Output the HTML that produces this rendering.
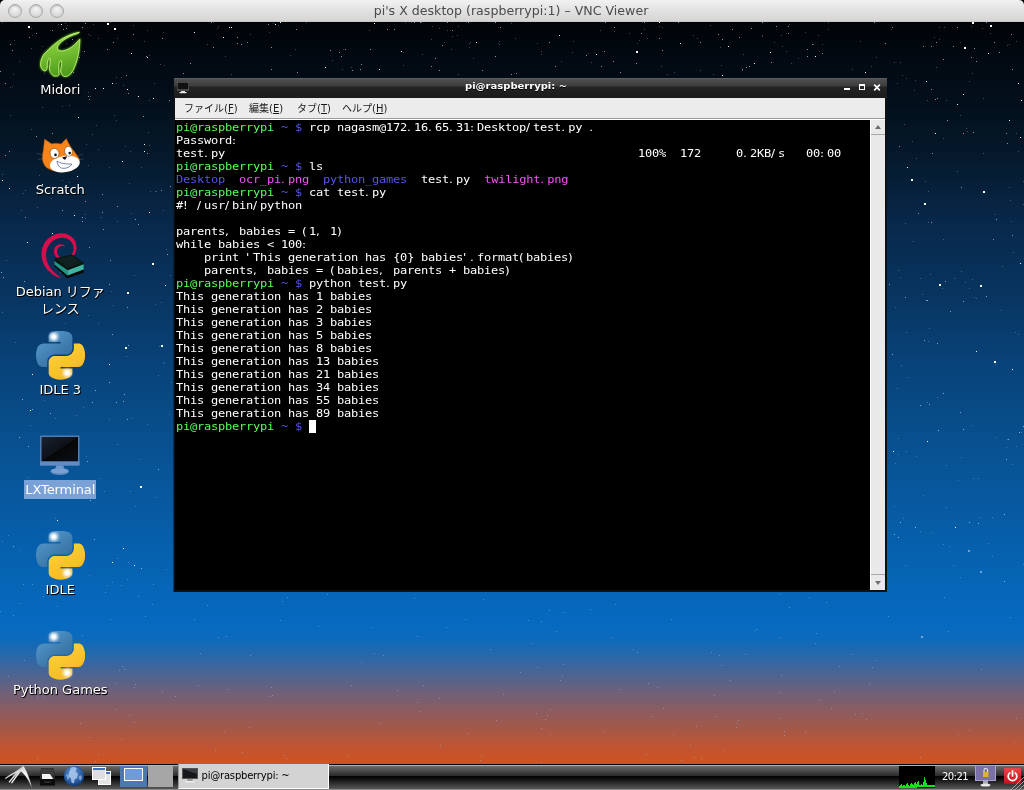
<!DOCTYPE html>
<html lang="ja">
<head>
<meta charset="utf-8">
<title>pi's X desktop (raspberrypi:1) - VNC Viewer</title>
<style>
*{box-sizing:border-box;margin:0;padding:0}
body>*{will-change:transform}
html,body{width:1024px;height:790px;overflow:hidden;background:#000}
body{position:relative;font-family:"DejaVu Sans","Liberation Sans","Noto Sans CJK JP",sans-serif;font-size:12px;color:#fff}
#mac{position:absolute;left:0;top:0;width:1024px;height:22px;background:linear-gradient(#f1f1f1,#e3e3e3 45%,#d5d5d5);border-bottom:1px solid #c6c6c6;border-radius:5px 5px 0 0;text-align:center;color:#4c4c4c;font-family:"DejaVu Sans","Liberation Sans",sans-serif;font-size:12.600px;line-height:21px;letter-spacing:0;padding-right:2px}
#mac .b{position:absolute;top:4px;width:14px;height:14px;border-radius:50%;background:radial-gradient(circle at 50% 35%,#f4f4f4,#dcdcdc 60%,#c6c6c6);border:1px solid #a9a9a9;box-shadow:inset 0 1px 1px #bbb}
#desk{position:absolute;left:0;top:22px;width:1024px;height:742px;overflow:hidden;background:linear-gradient(#010407 0px,#020912 38px,#030f1a 78px,#051a2d 138px,#08284a 200px,#08345f 269px,#084278 339px,#084e8c 408px,#07599f 478px,#0662b0 538px,#0667ba 578px,#066ac0 603px,#0e6abb 618px,#2868aa 634px,#4e6491 653px,#706078 671px,#8c5c5f 689px,#a55848 707px,#c05432 725px,#d0521f 742px)}
.ic{position:absolute;left:0;width:120px;text-align:center;font-size:13px;line-height:17px;color:#fff;text-shadow:1px 1px 1px #000,0 0 2px #000}
.ic svg{display:block;margin:0 auto}
.ic{position:absolute;left:0;width:120.500px;text-align:center;font-size:13px;line-height:17px;color:#fff;white-space:pre;text-shadow:1px 1px 0 #000,0 1px 1px rgba(0,0,0,.7)}
.ig{position:absolute;left:36px;width:48px;height:48px}
.ic span{background:#7ba2d7;padding:2px 1px 2px 1px;text-shadow:none;letter-spacing:-0.100px}
#win{position:absolute;left:174px;top:78px;width:713px;height:514px;background:#0e1013;box-shadow:-1px 0 0 rgba(8,16,26,.5)}
#tb{position:absolute;left:0;top:0;right:0;height:20px;background:linear-gradient(#6a6a6a 0,#505050 1px,#3c3c3c 8px,#242424 9px,#1c1c1c 19px);color:#fff;font-weight:bold;font-size:10px;line-height:15px;text-shadow:0 1px 0 #000}
#tb em{font-style:normal;position:absolute;left:291px;top:0;white-space:pre;transform:scaleY(.93);transform-origin:0 12px}
#mb{position:absolute;left:1px;top:20px;right:2px;height:22px;background:#ececec;border-bottom:1px solid #fff;color:#1a1a1a;font-size:10px;line-height:22px;white-space:pre}
#mb:after{content:"";position:absolute;left:0;right:0;bottom:0;height:1px;background:#9a9a9a}
#mb span{position:absolute;top:0}
#mb u{text-decoration:underline}
#term{position:absolute;left:1px;top:42px;width:695px;height:470px;background:#000;color:#fff;font-family:"DejaVu Sans Mono","Liberation Mono",monospace;font-size:12px;line-height:13px;letter-spacing:-0.2246px;white-space:pre;padding:1px 0 0 1px;overflow:hidden}
#term div{height:13px;transform:scaleY(.91);transform-origin:0 10px}
#term i{font-style:normal;display:inline-block;width:7px;letter-spacing:0;font-family:"DejaVu Sans","Liberation Sans",sans-serif;text-align:left;vertical-align:top;overflow:visible}
#term .g{color:#55ff55}#term .b{color:#5454e6}#term .m{color:#f455f4}
#term .cur{display:inline-block;width:7px;height:13px;background:#fff;vertical-align:top;transform:scaleY(1.0989);transform-origin:0 10px}
#sb{position:absolute;left:696px;top:42px;width:15px;height:470px;background:#e9e9e9;border-left:1px solid #fff}
#sb:before,#sb:after{content:"";position:absolute;left:4px;border:3.5px solid transparent}
#sb:before{top:1px;border-bottom:4px solid #6e6e6e;border-top-width:0;margin-top:4px}
#sb:after{bottom:5px;border-top:4px solid #6e6e6e;border-bottom-width:0}
#sb b{position:absolute;left:0;right:0;height:1px;background:#a8a8a8}
.wb{position:absolute;top:6px;width:6px;height:6px}
#panel{position:absolute;left:0;top:764px;width:1024px;height:26px;background:linear-gradient(#050505 0,#050505 1px,#b4b4ae 1px,#b4b4ae 2px,#6c6a6a 2px,#4a4a4a 7px,#2c2c2c 11.5px,#000 12px,#0a0a0a 14px,#3a3a3a 21px,#585858 25px,#8a8a8a 25px,#8a8a8a 26px);font-size:10px;color:#000}
#panel svg{position:absolute}
#pg1{position:absolute;left:120px;top:2px;width:27px;height:21px;background:#4b78b0}
#pg1 b{position:absolute;left:4px;top:2px;width:19px;height:13px;background:#6f9cd9;border:1px solid #fff}
#pg2{position:absolute;left:147.500px;top:2px;width:25.500px;height:21px;background:#a6a6a6}
#task{position:absolute;left:178px;top:0;width:151px;height:25px;background:#d3d3d3;border-right:1px solid #fff;border-bottom:1px solid #fff;border-left:1px solid #9a9a9a;line-height:24px;padding-left:22.500px;white-space:pre;color:#000;font-size:10px;letter-spacing:-0.200px}
#cpu{position:absolute;left:899px;top:2px;width:36px;height:22px;background:#000;overflow:hidden}
#clock{position:absolute;left:941px;top:2px;width:28px;line-height:21px;color:#fff;font-size:10px;text-align:center;letter-spacing:-0.550px}
</style>
</head>
<body>
<div id="mac"><span class="b" style="left:8px"></span><span class="b" style="left:29px"></span><span class="b" style="left:50px"></span>pi's X desktop (raspberrypi:1) – VNC Viewer</div>
<div id="desk"><svg width="1024" height="742" viewBox="0 0 1024 742" shape-rendering="crispEdges" style="position:absolute;left:0;top:0"><path d="M98 16h1M439 6h1M126 334h1M1016 424h1M928 169h1M499 19h1M149 33h1M700 48h1M934 15h1M912 119h1M710 3h1M1016 19h1M902 53h1M954 256h1M295 27h1M55 496h1M1009 165h1M57 527h1M451 27h1M953 543h1M971 403h1M432 4h1M8 513h1M988 521h1M116 98h1M647 16h1M149 78h1M458 52h1M39 153h1M37 185h1M1012 442h1M117 536h1M148 110h1M171 360h1M88 293h1M600 8h1M2 152h1M85 192h1M470 20h1M6 238h1M135 484h1M942 266h1M158 353h1M273 1h1M939 17h1M431 17h1M995 192h1M1006 425h1M762 14h1M156 169h1M1018 312h1M499 22h1M913 219h1M44 37h1M2 519h1M76 393h1M895 441h1M2 0h1M943 116h1M629 11h1M860 19h1M405 0h1M805 10h1M123 63h1M906 56h1M573 19h1M914 68h1M971 4h1M828 7h1M128 540h1M133 3h1M973 456h1M161 280h1M132 396h1M667 52h1M915 58h1M75 27h1M90 74h1M639 18h1M1015 310h1M332 38h1M351 45h1M85 196h1M78 413h1M897 61h1M1002 244h1M819 29h1M83 385h1M163 10h1M278 3h1M452 14h1M983 76h1M75 71h1M541 32h1M166 227h1M98 127h1M69 83h1M93 2h1M972 51h1M908 355h1M90 13h1M403 43h1M130 129h1M978 456h1M894 484h1M444 20h1M961 249h1M159 324h1M67 3h1M786 29h1M99 456h1M63 526h1M98 301h1M2 290h1M110 0h1M51 176h1M69 160h1M898 432h1M473 36h1M713 52h1M828 0h1M40 372h1M21 188h1M217 6h1M818 13h1M946 78h1M742 48h1M30 403h1M147 402h1M925 159h1M898 416h1M969 266h1M13 52h1M154 61h1M58 2h1M992 495h1M1011 199h1M101 195h1M937 375h1M70 141h1M111 269h1M169 392h1M923 473h1M65 1h1M163 188h1M898 248h1M86 122h1M1023 159h1M992 534h1M117 422h1M19 528h1M976 276h1M1010 178h1M949 524h1M62 158h1M42 24h1M995 342h1M774 20h1M96 103h1M990 11h1M903 496h1M798 36h1M958 458h1M44 378h1M749 44h1M116 61h1M905 543h1M891 7h1M1009 22h1M125 124h1M1013 230h1M343 27h1M92 112h1M572 30h1M946 485h1M109 145h1M23 171h1M141 145h1M42 85h1M73 372h1M588 31h1M960 555h1M44 51h1M721 43h1M1023 182h1M1018 129h1M895 285h1M469 25h1M86 434h1M60 70h1M218 4h1M661 44h1M129 161h1M789 2h1M498 21h1M743 32h1M974 275h1M901 343h1M637 21h1M76 528h1M121 55h1M996 415h1M422 32h1M88 12h1M403 30h1M231 52h1M147 8h1M541 29h1M160 42h1M164 43h1M822 22h1M900 255h1M871 44h1M113 283h1M693 13h1M960 20h1M943 217h1M166 547h1M916 434h1M900 40h1M117 199h1M89 553h1M155 169h1M957 149h1M928 200h1M697 16h1M163 340h1M447 8h1M10 65h1M55 396h1M674 50h1M928 319h1M561 39h1M250 12h1M458 4h1M927 78h1M50 541h1M19 39h1M720 25h1M813 22h1M67 341h1M31 6h1M225 34h1M31 107h1M88 70h1M929 306h1M10 93h1M906 310h1M131 191h1M88 143h1M876 35h1M306 0h1M1001 288h1M411 0h1M762 13h1M144 19h1M946 443h1M969 59h1M31 26h1M112 560h1M12 64h1M537 21h1M269 10h1M104 469h1M662 5h1M906 429h1M67 147h1M149 123h1M614 9h1M920 256h1M944 5h1M983 131h1M1016 111h1M86 276h1M469 21h1M127 557h1M66 21h1M342 47h1M982 6h1M936 45h1M66 124h1M905 201h1M155 282h1M916 136h1M939 5h1M967 109h1M922 272h1M644 7h1M920 509h1M1023 542h1M591 40h1M62 84h1M515 16h1M156 475h1M32 13h1M931 510h1M965 260h1M894 40h1M421 0h1M961 435h1M290 33h1M781 13h1M77 245h1M980 495h1M15 320h1M207 22h1M14 18h1M62 415h1M904 102h1M782 24h1M511 1h1M109 397h1M27 455h1M897 366h1M139 437h1M130 469h1M150 169h1M369 8h1M457 13h1M966 106h1M60 250h1M1007 23h1M960 93h1M117 16h1M114 93h1M170 253h1M943 522h1M927 380h1M972 257h1M65 301h1M1021 410h1M25 168h1M134 253h1M1007 417h1M659 4h1M930 252h1M791 41h1M852 47h1M116 55h1M164 341h1" stroke="#cfe2ff" stroke-width="1" opacity=".28"/><path d="M143 94h1M452 8h1M370 27h1M128 323h1M133 12h1M1011 12h1M360 47h1M24 259h1M110 238h1M807 27h1M107 27h1M971 35h1M3 255h1M268 2h1M938 408h1M926 278h1M749 44h1M37 473h1M29 15h1M113 20h1M500 5h1M10 22h1M1012 47h1M296 7h1M924 318h1M95 368h1M678 0h1M807 34h1M442 23h1M936 20h1M69 438h1M604 29h1M957 5h1M885 21h1M943 371h1M482 48h1M12 28h1M812 22h1M1004 492h1M109 360h1M394 7h1M905 275h1M1007 121h1M516 51h1M923 24h1M79 35h1M63 7h1M87 439h1M271 25h1M1006 437h1M339 30h1M943 37h1M25 195h1M32 387h1M935 77h1M141 546h1M960 390h1M961 165h1M986 0h1M993 217h1M788 11h1M1019 410h1M82 195h1M169 78h1M28 424h1M874 0h1M36 114h1M102 172h1M124 372h1M915 505h1M73 50h1M52 111h1M116 380h1M586 33h1M601 44h1M414 0h1M976 39h1M751 6h1M146 34h1M950 289h1M929 382h1M82 5h1M341 34h1M549 20h1M1006 111h1M127 285h1M973 110h1M211 0h1M13 524h1M892 332h1M52 8h1M732 7h1M996 197h1M123 379h1M5 133h1M297 50h1M1004 559h1M127 397h1M89 225h1M644 0h1M932 131h1M892 5h1M435 36h1M788 4h1M947 98h1M82 199h1M620 50h1M927 278h1M387 7h1M636 41h1M495 0h1M613 39h1M994 20h1M889 262h1M345 27h1M84 29h1M1012 213h1M762 0h1M605 0h1M190 41h1M85 1h1M999 30h1M72 17h1M918 191h1M89 77h1M92 380h1M147 131h1M986 274h1M420 0h1M162 16h1M641 11h1M431 44h1M978 501h1M974 26h1M742 47h1M54 29h1M718 12h1M678 0h1M511 52h1M94 517h1M5 61h1M237 21h1M1 250h1M963 279h1M659 16h1M352 48h1M920 383h1M52 29h1M19 415h1M241 22h1M112 312h1M138 202h1M899 124h1M931 200h1M953 24h1M103 207h1M439 48h1M822 31h1M963 111h1M614 5h1M931 24h1M722 17h1M109 262h1M247 20h1M700 20h1M128 71h1M1008 417h1M237 15h1M937 321h1M102 190h1M9 129h1M170 164h1M495 34h1M85 179h1M771 40h1M36 11h1M555 44h1M126 53h1M963 407h1M271 47h1M161 168h1M447 0h1M66 6h1M931 67h1M898 515h1M90 478h1M894 512h1M776 4h1M88 74h1M945 259h1M213 25h1M900 500h1M468 0h1M662 28h1M60 316h1M158 447h1M937 76h1M969 500h1M330 28h1M56 23h1M62 188h1M183 51h1M117 184h1M361 42h1M739 15h1M22 377h1M50 391h1M746 45h1M167 232h1M135 197h1M47 327h1M0 49h1M1023 404h1" stroke="#dbe9ff" stroke-width="1" opacity=".6"/><path d="M127 67h1M680 21h1M57 498h1M907 145h1M957 82h1M131 31h1M476 20h1M955 505h1M815 34h1M153 76h1M1020 115h1M149 190h1M144 129h1M138 74h1M103 66h1M1009 98h1M926 59h1M893 429h1M229 5h1M42 162h1M1012 347h1M165 263h1M728 24h1M401 29h1M95 66h1M123 526h1M1020 241h1M122 139h1M865 50h1M77 154h1M988 31h1M9 166h1M275 2h1M61 2h1M74 193h1M27 220h1M722 53h1M927 419h1M223 15h1M596 32h1M659 0h1M754 41h1M231 5h1M379 47h1M559 13h1M30 388h1M1021 78h1M134 543h1M976 329h1M1018 61h1M325 45h1M2 158h1M374 1h1M280 0h1M52 211h1M109 342h1M147 35h1M112 540h1M78 95h1M112 61h1M770 30h1M32 352h1M963 72h1M935 111h1M194 10h1M144 122h1" stroke="#fff" stroke-width="1" opacity=".95"/><path d="M663 686h1M121 563h1M80 701h1M779 696h1M420 689h1M715 694h1M348 734h1M124 647h1M414 576h1M250 633h1M815 621h1M468 711h1M541 599h1M694 735h1M224 709h1M37 736h1M503 672h1M805 710h1M440 723h1M673 712h1M32 562h1M738 698h1M152 582h1M981 647h1M550 712h1M175 674h1M920 735h1M536 691h1M24 638h1M563 590h1M105 570h1M101 671h1M681 738h1M969 708h1M958 712h1M869 662h1M383 633h1M115 687h1M162 669h1M648 661h1M271 665h1M671 597h1M215 728h1M82 613h1M397 668h1M855 692h1M417 680h1M351 663h1M89 715h1M563 642h1M736 705h1M745 632h1M541 706h1M119 648h1M483 577h1M13 593h1M439 676h1M876 638h1M318 604h1M200 631h1M374 631h1M207 583h1M820 678h1M107 563h1M556 609h1M371 605h1M755 608h1M528 598h1M446 605h1M520 650h1M423 663h1M531 621h1M757 607h1M481 733h1M198 663h1M851 632h1M282 579h1M465 597h1M37 675h1M784 709h1M496 698h1M153 562h1M8 654h1M1014 720h1M816 611h1M134 700h1M826 580h1M270 674h1M719 633h1M721 643h1M714 673h1M272 673h1M944 575h1M809 575h1M380 701h1M361 640h1M862 691h1M57 584h1M872 645h1M23 562h1M43 574h1M779 572h1M550 687h1M701 736h1M637 630h1M284 733h1M480 738h1M619 667h1M723 728h1M138 574h1M948 609h1M839 644h1M611 615h1M547 693h1M286 736h1M98 732h1M1016 696h1M784 713h1M68 645h1M537 645h1M134 665h1M562 654h1M1010 595h1M866 697h1M604 709h1M789 585h1M417 614h1M888 594h1M280 598h1M116 661h1M327 572h1M218 615h1M490 627h1M541 740h1M690 723h1M831 686h1M226 614h1M652 694h1M0 589h1M545 697h1M122 644h1M95 739h1M711 630h1M737 701h1M633 627h1M657 665h1M590 587h1M227 667h1M135 662h1M780 615h1M121 717h1M696 704h1M129 693h1M646 732h1M43 675h1M145 594h1M110 597h1M781 653h1M615 582h1M730 658h1M249 705h1M834 669h1M242 730h1M560 658h1M194 597h1M20 581h1M549 588h1M779 670h1M287 575h1" stroke="#9cc4f4" stroke-width="1" opacity=".45"/><path d="M636 30h2M990 4h2M972 1h2M911 158h2M983 170h2M964 26h2M924 182h2M980 264h2M994 340h2M939 263h2M114 7h2M107 2h2M28 5h2M91 -1h2M125 326h2M140 465h2M161 324h2M127 271h2M152 242h2" stroke="#fff" stroke-width="2"/><path d="M968 529h2M980 550h2M921 615h2" stroke="#b8d8ff" stroke-width="2" opacity=".55"/></svg></div>
<svg width="0" height="0" style="position:absolute"><defs>
<linearGradient id="pyb" x1="0" y1="0" x2="0.8" y2="1"><stop offset="0" stop-color="#5a9fd4"/><stop offset="1" stop-color="#306998"/></linearGradient>
<linearGradient id="pyy" x1="0.2" y1="0" x2="0.8" y2="1"><stop offset="0" stop-color="#ffd43b"/><stop offset="1" stop-color="#f2b322"/></linearGradient>
<filter id="gw" x="-50%" y="-50%" width="200%" height="200%"><feGaussianBlur stdDeviation="3.5"/></filter>
<g id="py"><path fill="url(#pyb)" d="M54.9 0C50.3 0 46 .4 42.1 1.1 30.8 3.1 28.7 7.3 28.7 15v10.3h26.8v3.4H18.6c-7.8 0-14.6 4.7-16.7 13.6-2.5 10.2-2.6 16.6 0 27.2 1.9 8 6.4 13.6 14.2 13.6h9.3V70.8c0-8.8 7.6-16.6 16.7-16.6h26.8c7.5 0 13.4-6.1 13.4-13.6V15c0-7.3-6.1-12.7-13.4-13.9C64.3.3 59.5 0 54.900 0z"/><path fill="url(#pyy)" d="M85.600 28.700v11.900c0 9.200-7.800 17-16.700 17H42.100c-7.300 0-13.400 6.300-13.400 13.600v25.500c0 7.300 6.300 11.500 13.400 13.600 8.500 2.500 16.600 2.900 26.800 0 6.700-2 13.400-5.900 13.400-13.600V86.500H55.500v-3.400h40.200c7.800 0 10.700-5.400 13.400-13.600 2.800-8.400 2.700-16.500 0-27.200-1.900-7.800-5.600-13.600-13.400-13.600z"/><circle cx="40.400" cy="13.300" r="9" fill="#fff" filter="url(#gw)"/><circle cx="40.400" cy="13.300" r="4.200" fill="#fff"/><circle cx="70.600" cy="96.700" r="9" fill="#fff" filter="url(#gw)"/><circle cx="70.600" cy="96.700" r="4.200" fill="#fff"/></g>
</defs></svg>

<!-- Midori -->
<svg class="ig" style="top:30px" viewBox="0 0 48 48"><defs><linearGradient id="mg" x1="0.3" y1="0" x2="0.5" y2="1"><stop offset="0" stop-color="#9be04a"/><stop offset="1" stop-color="#4c9a1a"/></linearGradient><filter id="mgl" x="-20%" y="-20%" width="140%" height="140%"><feGaussianBlur stdDeviation="1.2"/></filter></defs>
<path id="mp" d="M43.400 2.300C36 3.500 28 7.500 24.300 9.900 18 14 11 21 7.900 24.300 5.500 28 4.400 32 4.600 34.900c.2 2.600 1.400 4.900 3.400 5.700 1.500 .6 2.800-.1 3.200-3.100 .1-2.500 .1-4 .3-5.300 .3-2.200 1.100-4.200 2-4.200 .8 .3 .7 2.500 .6 4.200-.2 2.800-.7 4.800-.6 6.600 .2 2.200 .7 3.700 1.600 4.600 1.400 2.100 2.900 2.800 4 2.700 1.900 .1 3.500-.3 3.900-1.400 .2-1.700-.4-3.700-.3-5.900 0-1.800 .1-3.800 .3-5.300 .4-2 1.200-3.200 2-3.200 .8 .5 .7 2.700 .6 4.600-.2 2.100-1 4.100-.9 5.900 .2 2 .8 3.400 1.600 4.300 1.200 1.200 2.700 1.500 4 1.300 1.700-.4 3.300-1.600 4.600-3 1.600-1.900 2.900-4.400 3.900-7.200 1.500-3.700 2.600-7.200 3.300-10.600 .7-3.100 1.100-6.100 1.300-9.200 .3-2.900 .4-5.400 .4-7.200-1.800 1.800-3.300 3.600-5 5.300-1.800 1.800-4 3.400-6.600 4.600-2.200 1.100-4.400 1.900-6.600 1.900-2.100 0-3.800-.7-4.200-1.900-.3-1.300 .1-2.700 1-4 1.100-1.600 2.600-3.200 4.600-4.600 2-1.500 4-2.700 6.500-3.900 2.500-1.200 5.300-2.200 7.900-3z"/>
<use href="#mp" fill="#6fd020" stroke="#6fd020" stroke-width="1.500" filter="url(#mgl)" opacity=".8"/><use href="#mp" fill="url(#mg)" stroke="#c4f27a" stroke-width="0.9" stroke-linejoin="round"/></svg>
<div class="ic" style="top:81px">Midori</div>

<!-- Scratch -->
<svg class="ig" style="top:130px" viewBox="0 0 48 48"><path d="M8.500 9.100L15.500 13.800C18.500 13 22 13 25 14L30.400 8.500C31.500 11 33 14 35.200 17.600 37 20 39.500 23 41.900 26.700c1.600 1.800 1.900 3.300 1.500 4.800C42.500 36 38.500 39.500 34 40.700c-3 1.100-6.500 1.400-9.700 1.200-4.300-.3-7.800-1.100-10.300-2.400-3.500-1.500-5.500-3.500-6.100-5.500-1.400-2.500-1.700-5-1.500-6.700 .1-2.800 .5-5.300 .9-7.300 .5-4 .9-7.500 1.200-10.900z" fill="#f7841b" stroke="#a0500a" stroke-width=".5"/><ellipse cx="28.800" cy="34" rx="15" ry="8.200" fill="#fff" transform="rotate(-8 28.800 34)"/><ellipse cx="18.500" cy="23.400" rx="4.400" ry="5" fill="#fff" stroke="#6a4210" stroke-width=".5" transform="rotate(-10 18.500 23.400)"/><ellipse cx="32.500" cy="21.300" rx="3.800" ry="5" fill="#fff" stroke="#6a4210" stroke-width=".5" transform="rotate(-10 32.500 21.300)"/><circle cx="19.500" cy="24.900" r="1.300" fill="#111"/><circle cx="33.700" cy="23.100" r="1.300" fill="#111"/><path d="M26.300 27.200l4.800-.9-1.600 3.200c-1.200 .3-2.500-.7-3.200-2.300z" fill="#111"/><path d="M21 31c2.500 2.300 9.500 3.300 14.800 3-1.500 3-5 4.600-9 4.300-3.500-.4-5.500-3.300-5.800-7.300z" fill="#fff" stroke="#55648c" stroke-width=".8" stroke-linejoin="round"/><path d="M1 23.500l6 1.500M2 29.500l5.500-1M47 24l-5.500 2M47.500 29l-5 .5" stroke="#9fb2c8" stroke-width=".45" opacity=".55"/></svg>
<div class="ic" style="top:181px">Scratch</div>

<!-- Debian reference -->
<svg class="ig" style="top:230px" viewBox="0 0 48 48"><path d="M39 11C36 5.500 30 2.500 23 3.500 13 5 6 13 5.500 23 5 33 11 42 21 47c1 .5 3 1 4 .5C16 42 9.500 33.500 10 24 10.800 15 17 8.300 26 7.800c6-.3 11 4.200 11.500 9.700 .5 5.500-3 10-8.500 10.500-4.500 .3-8-2.500-8-6.500 0-3 2-5.200 5-5.500 1.500 0 2.500 .5 3 1-.5-2-2.500-3-5-2.800-4 .5-6.500 4-6 8 .6 5 5 8.500 11 8 7-.6 12-6.500 11.500-13.500-.1-2-.7-4-1.500-5.700z" fill="#d40f4b"/><path d="M18.400 33L31.500 45l16.100-6v3.800L31.200 48.200 18.400 36z" fill="#050807"/><path d="M18.400 30.600l13.400 9.100-.3 5.800L18.400 34.500z" fill="#249484"/><path d="M31.800 39.700l15.800-5.700v5.500L31.500 45.500z" fill="#3fb5a2"/><path d="M19 28.200l17-3.600 11.600 7.900v1.700L31.800 40.200 18.400 31z" fill="#0a1614"/><path d="M20.500 28.800l15.300-3.200 10 6.900-14 5.400z" fill="#10221f"/></svg>
<div class="ic" style="top:283px;font-family:'DejaVu Sans','Noto Sans CJK JP',sans-serif">Debian リファ
レンス</div>

<!-- IDLE 3 -->
<svg class="ig" style="left:35.600px;top:330.500px;width:48.800px;height:48.800px" viewBox="0 0 110.400 112.700" preserveAspectRatio="none"><use href="#py"/></svg>
<div class="ic" style="top:381px">IDLE 3</div>

<!-- LXTerminal -->
<svg class="ig" style="top:430px" viewBox="0 0 48 48"><defs><linearGradient id="scr" x1="0" y1="0" x2="1" y2="1"><stop offset="0" stop-color="#1a2230"/><stop offset=".5" stop-color="#0d1118"/><stop offset=".5" stop-color="#060606"/><stop offset="1" stop-color="#0b0f18"/></linearGradient></defs><rect x="4" y="5.500" width="39.500" height="30" rx="1.200" fill="#4f7db6"/><rect x="5.500" y="7" width="36.500" height="24.500" fill="url(#scr)"/><rect x="4" y="31.500" width="39.500" height="4" fill="#5f8cc4"/><path d="M20 35.500h7.500l.8 5h-9z" fill="#6e97cb"/><ellipse cx="23.700" cy="41.500" rx="9.300" ry="3.400" fill="#5d8bc4"/><ellipse cx="23.700" cy="40.800" rx="8.500" ry="2.600" fill="#7aa0d2"/></svg>
<div class="ic" style="top:481px"><span>LXTerminal</span></div>

<!-- IDLE -->
<svg class="ig" style="left:35.600px;top:530.500px;width:48.800px;height:48.800px" viewBox="0 0 110.400 112.700" preserveAspectRatio="none"><use href="#py"/></svg>
<div class="ic" style="top:581px">IDLE</div>

<!-- Python Games -->
<svg class="ig" style="left:35.600px;top:630.500px;width:48.800px;height:48.800px" viewBox="0 0 110.400 112.700" preserveAspectRatio="none"><use href="#py"/></svg>
<div class="ic" style="top:681px">Python Games</div>
<div id="win">
<div id="tb"><em>pi@raspberrypi: ~</em><svg style="position:absolute;left:3px;top:4px" width="12" height="12" viewBox="0 0 12 12"><rect x="0" y="0" width="12" height="8" fill="#111" stroke="#777" stroke-width="1"/><rect x="4" y="9" width="4" height="1" fill="#ddd"/><rect x="2.5" y="10" width="7" height="1.2" fill="#eee"/></svg><svg style="position:absolute;left:668px;top:4px" width="40" height="10" viewBox="0 0 40 10" shape-rendering="crispEdges"><rect x="2" y="6" width="6" height="2" fill="#fff"/><rect x="17.5" y="2.5" width="5" height="5" fill="none" stroke="#fff" stroke-width="1"/><rect x="17" y="2" width="6" height="2" fill="#fff"/></svg><svg style="position:absolute;left:699px;top:5px" width="8" height="8" viewBox="0 0 8 8"><path d="M1.2 1.7L6.8 7.3M6.8 1.7L1.2 7.3" stroke="#fff" stroke-width="1.7"/></svg></div>
<div id="mb"><span style="left:9px">ファイル(<u>F</u>)</span><span style="left:74px">編集(<u>E</u>)</span><span style="left:122px">タブ(<u>T</u>)</span><span style="left:167px">ヘルプ(<u>H</u>)</span></div>
<div id="term"><div><span class="g">pi@raspberrypi</span><span class="b"> ~ $</span> rcp nagasm@172<i>.</i>16<i>.</i>65<i>.</i>31<i>:</i>Desktop<i>/</i>test<i>.</i>py <i>.</i></div><div>Password<i>:</i></div><div>test<i>.</i>py                                                           100%  172     0<i>.</i>2KB<i>/</i>s   00<i>:</i>00</div><div><span class="g">pi@raspberrypi</span><span class="b"> ~ $</span> ls</div><div><span class="b">Desktop</span>  <span class="m">ocr_pi<i>.</i>png</span>  <span class="b">python_games</span>  test<i>.</i>py  <span class="m">twilight<i>.</i>png</span></div><div><span class="g">pi@raspberrypi</span><span class="b"> ~ $</span> cat test<i>.</i>py</div><div>#<i>!</i> <i>/</i>usr<i>/</i>bin<i>/</i>python</div><div></div><div>parents<i>,</i> babies = <i>(</i>1<i>,</i> 1<i>)</i></div><div>while babies &lt; 100<i>:</i></div><div>    print <i>&#x27;</i>This generation has <i>{</i>0<i>}</i> babies<i>&#x27;</i><i>.</i>format<i>(</i>babies<i>)</i></div><div>    parents<i>,</i> babies = <i>(</i>babies<i>,</i> parents + babies<i>)</i></div><div><span class="g">pi@raspberrypi</span><span class="b"> ~ $</span> python test<i>.</i>py</div><div>This generation has 1 babies</div><div>This generation has 2 babies</div><div>This generation has 3 babies</div><div>This generation has 5 babies</div><div>This generation has 8 babies</div><div>This generation has 13 babies</div><div>This generation has 21 babies</div><div>This generation has 34 babies</div><div>This generation has 55 babies</div><div>This generation has 89 babies</div><div><span class="g">pi@raspberrypi</span><span class="b"> ~ $</span> <b class="cur"></b></div></div>
<div id="sb"><b style="top:14px"></b><b style="bottom:15px"></b></div>
</div>
<div id="panel">
<!-- LXDE logo -->
<svg style="left:0;top:0" width="36" height="26" viewBox="0 0 36 26"><defs><linearGradient id="lx" x1="0" y1="0" x2="1" y2="1"><stop offset="0" stop-color="#9a9a9a"/><stop offset=".55" stop-color="#f4f4f4"/><stop offset="1" stop-color="#b8b8b8"/></linearGradient></defs><path d="M23.400 1.800C26.500 7 30.300 15 31.900 24.200 29.300 17.500 25.500 10.800 20.800 7.600L12 19.500l-1.100-.7L17.600 9.300 9.500 18.800l-1-.7L15.600 9 5.500 14.900l-.6-1C12 9.300 18.500 6 23.400 1.800z" fill="url(#lx)"/></svg>
<!-- file manager -->
<svg style="left:39px;top:3px" width="17" height="19" viewBox="0 0 17 19"><path d="M2 1h12.500l1.500 8v9.500H1V9z" fill="#2a2a2a"/><path d="M2.500 1.500h11.500l1.300 7H1.800z" fill="#3c3c3c"/><path d="M3 7h8l3.200 5H3z" fill="#f4f4f4"/><rect x="1" y="12" width="15" height="6.500" fill="#0c0c0c"/><rect x="5.500" y="14.500" width="6" height="1.200" fill="#3a3a3a"/></svg>
<!-- globe -->
<svg style="left:63px;top:1px" width="22" height="22" viewBox="0 0 22 22"><defs><radialGradient id="gl" cx="45%" cy="35%" r="65%"><stop offset="0" stop-color="#6f9fd8"/><stop offset="0.6" stop-color="#2f62a8"/><stop offset="1" stop-color="#123a74"/></radialGradient></defs><circle cx="11" cy="11" r="10.2" fill="url(#gl)"/><path d="M8 2.5c2-1 5-0.5 6 1l-1.5 3 2.5 2.5-1 4-2.5 1.5-0.5 4-2.5-1-0.5-4-2.5-2 0.5-4z" fill="#a9c8ec" opacity=".85"/><path d="M3 9l2.5 1 0.5 3.5-1.5 1.5z M15.5 12l2.5-2 1 3-2 3z" fill="#9fc0e8" opacity=".7"/></svg>
<!-- windows icon -->
<svg style="left:92px;top:3px" width="21" height="19" viewBox="0 0 21 19" shape-rendering="crispEdges"><rect x="6.500" y="4.500" width="12" height="13" fill="#e4e4e4" stroke="#fff"/><rect x="7" y="5" width="11" height="2" fill="#3f6fc4"/><rect x="0.500" y="0.500" width="13" height="12" fill="#dedede" stroke="#fff"/><rect x="1" y="1" width="12" height="2" fill="#3f6fc4"/></svg>
<div id="pg1"><b></b></div><div id="pg2"></div>
<div id="task"><svg style="left:3px;top:4px" width="16" height="17" viewBox="0 0 15 17" preserveAspectRatio="none"><rect x="0.5" y="0.5" width="14" height="10" fill="#15171a" stroke="#555"/><path d="M1 1h13v5z" fill="#3a3d42"/><rect x="5" y="11" width="5" height="2" fill="#999"/><rect x="3" y="13" width="9" height="1.6" rx=".8" fill="#eee"/></svg>pi@raspberrypi: ~</div>
<div id="cpu"><svg style="left:0;top:-2px" width="36" height="24" viewBox="0 0 36 24" shape-rendering="crispEdges"><path d="M0 24V22h1v-1h1v-1h1v2h1v-1h2v1h1v-2h1v-1h1v2h1v1h1v-2h1v-1h1v1h1v1h1v-2h1v-1h1v2h1v-2h1v-1h1v4h2v-1h1v1h1v-3h1v-5h1v3h1v3h1v2h8v2z" fill="#14e414"/></svg></div>
<div id="clock">20:21</div>
<!-- lock screen -->
<svg style="left:975px;top:1px" width="21" height="24" viewBox="0 0 21 24"><rect x="0.5" y="0.5" width="20" height="15" fill="#7a6fa6" stroke="#a9a3c4"/><rect x="8" y="7" width="5.5" height="5" fill="#e0b030"/><path d="M9 7V5.2a1.8 1.8 0 0 1 3.6 0V7" fill="none" stroke="#d8d8d8" stroke-width="1.2"/><rect x="8" y="16" width="5" height="3" fill="#aaa"/><ellipse cx="10.5" cy="20" rx="5" ry="1.6" fill="#e8e8e8"/></svg>
<!-- power -->
<svg style="left:1003.500px;top:3.500px" width="17" height="16" viewBox="0 0 18 17"><defs><linearGradient id="pw" x1="0" y1="0" x2="0" y2="1"><stop offset="0" stop-color="#f0444a"/><stop offset="1" stop-color="#c21218"/></linearGradient></defs><rect x="0" y="0" width="18" height="17" rx="1.5" fill="url(#pw)"/><path d="M6.2 5.2a4.6 4.6 0 1 0 5.6 0" fill="none" stroke="#fff" stroke-width="1.8" stroke-linecap="round"/><path d="M9 3v5.5" stroke="#fff" stroke-width="1.8" stroke-linecap="round"/></svg>
<svg style="left:1009px;top:11px" width="15" height="15" viewBox="0 0 15 15"><path d="M2 15L15 2M6 15L15 6M10 15L15 10" stroke="#c8c8c8" stroke-width="1" opacity=".75"/><path d="M3.200 15L15 3.200M7.200 15L15 7.200M11.200 15L15 11.200" stroke="#333" stroke-width="1" opacity=".6"/></svg>
</div>
</body>
</html>
